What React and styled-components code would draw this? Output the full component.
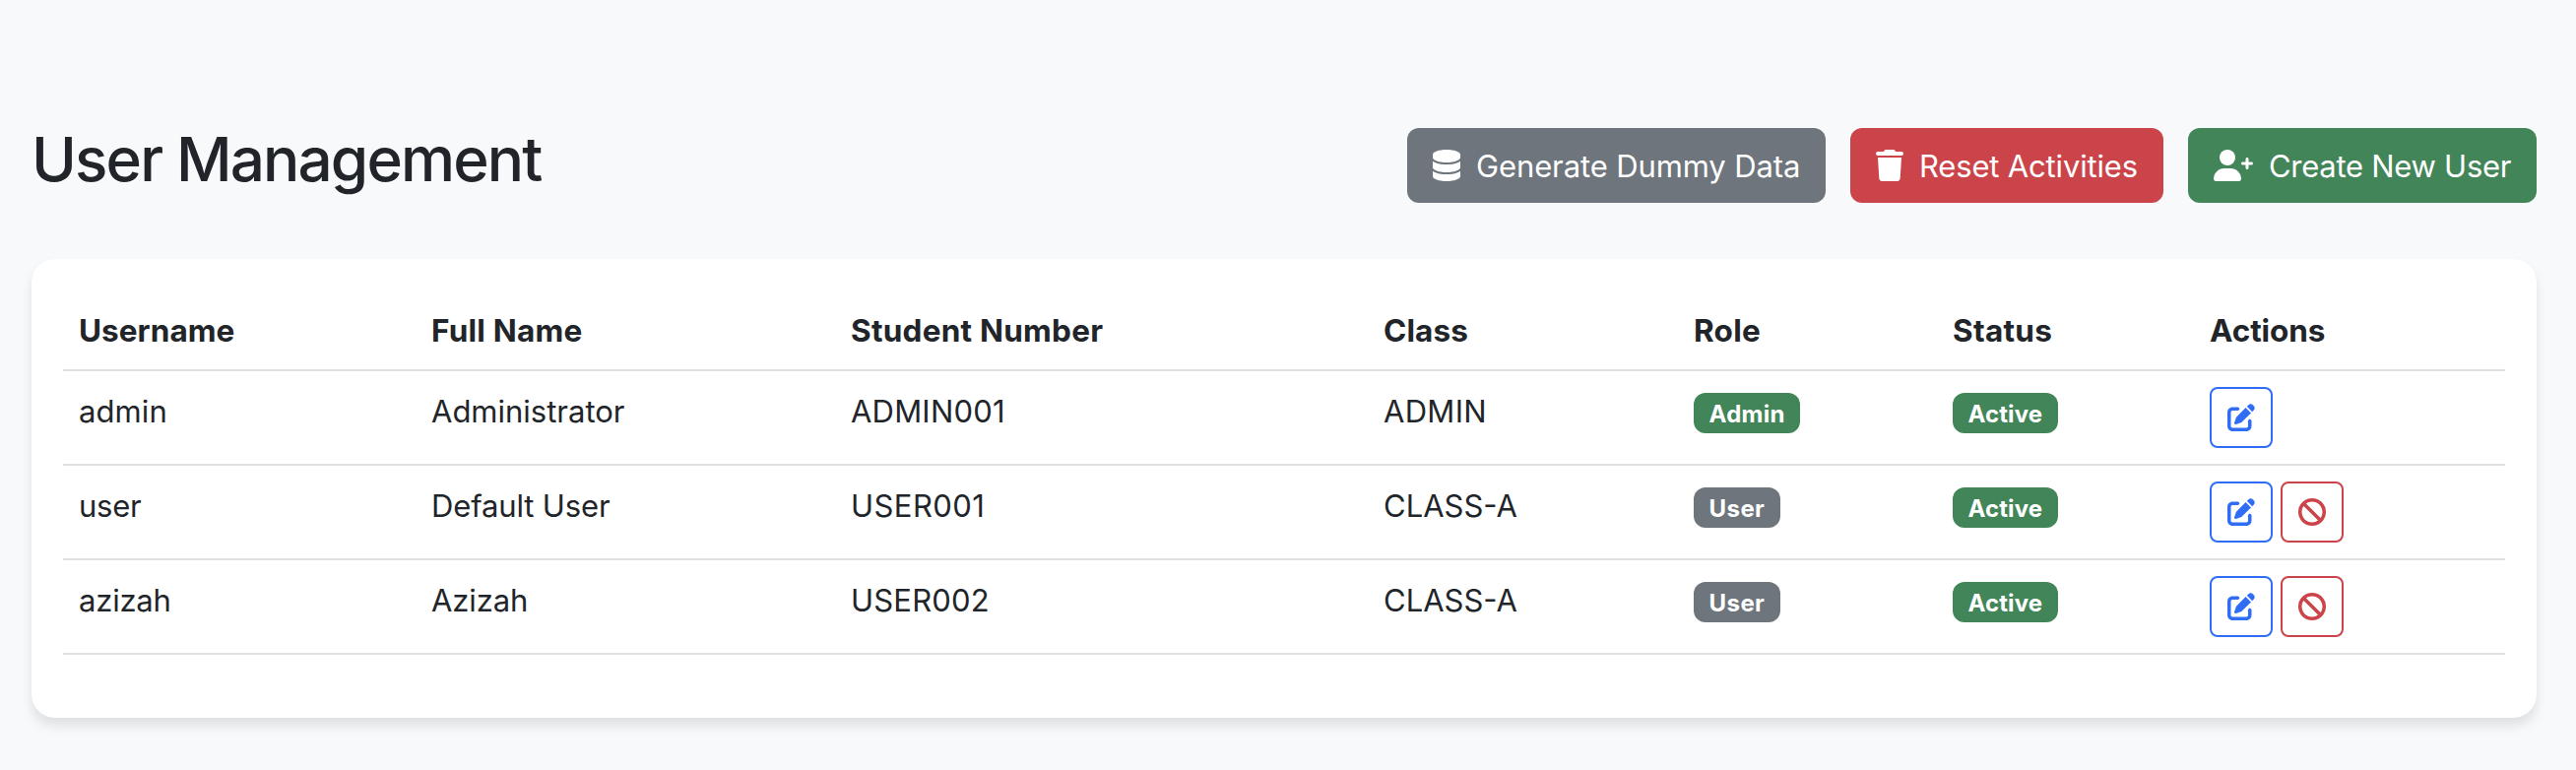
import React from "react";
import styled, { createGlobalStyle } from "styled-components";
import { FaDatabase, FaTrash, FaPenToSquare, FaBan } from "react-icons/fa6";

const colors = {
  page: "#f8f9fb",
  text: "#212529",
  line: "#dee2e6",
  secondary: "#6e757c",
  danger: "#cb444a",
  success: "#418558",
  primary: "#2f6df6",
};

const GlobalStyle = createGlobalStyle`
  *, *::before, *::after { box-sizing: border-box; }
  body {
    margin: 0;
    background: ${colors.page};
    color: ${colors.text};
    font-family: Inter, "Liberation Sans", sans-serif;
    font-size: 31px;
    line-height: 48px;
  }
`;

const Page = styled.main`
  min-height: 782px;
  padding: 130px 40px 53px 32px;
`;

const Header = styled.header`
  display: flex;
  justify-content: space-between;
  align-items: flex-start;
  margin-bottom: 57px;
`;

const Title = styled.h2`
  margin: 0;
  padding-top: 1px;
  font-size: 62px;
  font-weight: 500;
  line-height: 62px;
  letter-spacing: -1.85px;
`;

const Toolbar = styled.div`
  display: flex;
  gap: 25px;
`;

const Button = styled.button`
  display: flex;
  align-items: center;
  gap: 16px;
  width: ${(p) => p.$width}px;
  height: 76px;
  padding: 0 0 0 26px;
  border: 0;
  border-radius: 12px;
  background: ${(p) => colors[p.$tone]};
  color: #fff;
  font: inherit;
  letter-spacing: ${(p) => p.$tracking}px;
  white-space: nowrap;

  svg {
    flex: none;
    width: ${(p) => p.$iconWidth || 28}px;
    height: 32px;
  }
`;

const ButtonLabel = styled.span`
  padding-top: 2px;
`;

const Card = styled.section`
  padding: 32px 32px 64px;
  border-radius: 24px;
  background: #fff;
  box-shadow: 0 8px 12px rgba(0, 0, 0, 0.1);
`;

const Table = styled.table`
  width: 2480px;
  table-layout: fixed;
  border-collapse: separate;
  border-spacing: 0;
`;

const Column = styled.col`
  width: ${(p) => p.$width}px;
`;

const Cell = styled.td`
  padding: 16px;
  border-bottom: 2px solid ${colors.line};
  text-align: left;
  vertical-align: top;
  white-space: nowrap;
`;

const TextCell = styled(Cell)`
  padding: 17px 16px 15px;
  letter-spacing: ${(p) => p.$tracking}px;
`;

const HeadCell = styled(TextCell)`
  font-size: 31.5px;
  font-weight: 700;
`;

const Badge = styled.span`
  display: block;
  width: ${(p) => p.$width}px;
  height: 41px;
  margin-top: 6px;
  padding: 10px 0 7px 15.6px;
  border-radius: 12px;
  background: ${(p) => colors[p.$tone]};
  color: #fff;
  font-size: 24px;
  font-weight: 700;
  line-height: 24px;
  letter-spacing: ${(p) => p.$tracking}px;
`;

const Actions = styled.div`
  display: flex;
  gap: 8px;
`;

const IconButton = styled.button`
  display: flex;
  align-items: center;
  justify-content: center;
  width: 64px;
  height: 62px;
  padding: 0;
  border: 2px solid ${(p) => colors[p.$tone]};
  border-radius: 8px;
  background: transparent;
  color: ${(p) => colors[p.$tone]};
  font-size: 28px;
`;

function UserPlusIcon() {
  return (
    <svg viewBox="0 0 640 512" fill="currentColor" aria-hidden="true">
      <circle cx="224" cy="128" r="128" />
      <path d="M274.7 304H173.3C77.6 304 0 381.6 0 477.3C0 496.5 15.5 512 34.7 512h378.7C432.5 512 448 496.5 448 477.3C448 381.6 370.4 304 274.7 304z" />
      <path d="M616 200h-48v-48c0-13.3-10.7-24-24-24s-24 10.7-24 24v48h-48c-13.3 0-24 10.7-24 24s10.7 24 24 24h48v48c0 13.3 10.7 24 24 24s24-10.7 24-24v-48h48c13.3 0 24-10.7 24-24S629.3 200 616 200z" />
    </svg>
  );
}

const columns = [
  { label: "Username", width: 358, tracking: 0.05 },
  { label: "Full Name", width: 426, tracking: 0.25 },
  { label: "Student Number", width: 541, tracking: 0.25 },
  { label: "Class", width: 315, tracking: 0.1 },
  { label: "Role", width: 263, tracking: 0.3 },
  { label: "Status", width: 261, tracking: 0.3 },
  { label: "Actions", width: 316, tracking: -0.1 },
];

const roles = {
  Admin: { tone: "success", width: 108, tracking: 0.25 },
  User: { tone: "secondary", width: 88, tracking: 0.4 },
};

const users = [
  {
    fields: [["admin", 0.1], ["Administrator", 0], ["ADMIN001", 0.2], ["ADMIN", 0.3]],
    role: "Admin",
  },
  {
    fields: [["user", -0.25], ["Default User", -0.14], ["USER001", 0.45], ["CLASS-A", 0]],
    role: "User",
    canDisable: true,
  },
  {
    fields: [["azizah", -0.2], ["Azizah", -0.1], ["USER002", 0.2], ["CLASS-A", 0]],
    role: "User",
    canDisable: true,
  },
];

function UserRow({ user }) {
  const role = roles[user.role];
  return (
    <tr>
      {user.fields.map(([text, tracking], i) => (
        <TextCell key={i} $tracking={tracking}>{text}</TextCell>
      ))}
      <Cell>
        <Badge $tone={role.tone} $width={role.width} $tracking={role.tracking}>{user.role}</Badge>
      </Cell>
      <Cell>
        <Badge $tone="success" $width={107} $tracking={0.08}>Active</Badge>
      </Cell>
      <Cell>
        <Actions>
          <IconButton $tone="primary" aria-label="Edit user"><FaPenToSquare /></IconButton>
          {user.canDisable && (
            <IconButton $tone="danger" aria-label="Disable user"><FaBan /></IconButton>
          )}
        </Actions>
      </Cell>
    </tr>
  );
}

export default function App() {
  return (
    <>
      <GlobalStyle />
      <Page>
        <Header>
          <Title>User Management</Title>
          <Toolbar>
            <Button $tone="secondary" $width={425} $tracking={-0.12}>
              <FaDatabase />
              <ButtonLabel>Generate Dummy Data</ButtonLabel>
            </Button>
            <Button $tone="danger" $width={318} $tracking={-0.17}>
              <FaTrash />
              <ButtonLabel>Reset Activities</ButtonLabel>
            </Button>
            <Button $tone="success" $width={354} $iconWidth={40} $tracking={-0.28}>
              <UserPlusIcon />
              <ButtonLabel>Create New User</ButtonLabel>
            </Button>
          </Toolbar>
        </Header>
        <Card>
          <Table>
            <colgroup>
              {columns.map((c) => <Column key={c.label} $width={c.width} />)}
            </colgroup>
            <thead>
              <tr>
                {columns.map((c) => (
                  <HeadCell as="th" key={c.label} $tracking={c.tracking}>{c.label}</HeadCell>
                ))}
              </tr>
            </thead>
            <tbody>
              {users.map((user) => <UserRow key={user.fields[0][0]} user={user} />)}
            </tbody>
          </Table>
        </Card>
      </Page>
    </>
  );
}
